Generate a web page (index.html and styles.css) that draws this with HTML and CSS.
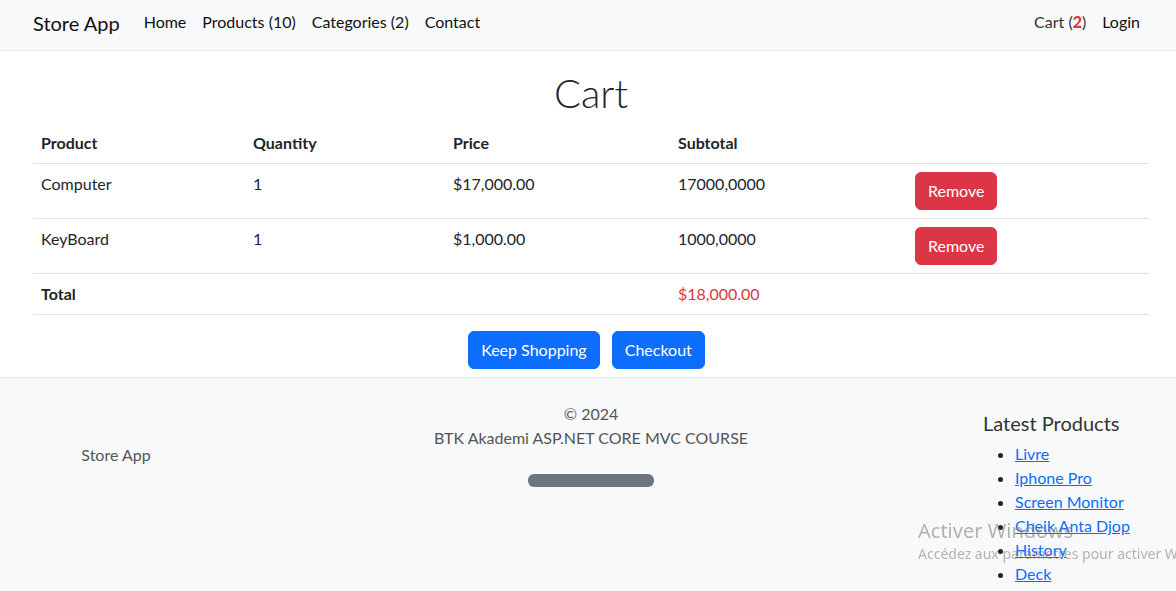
FILE: index.html
```html
<!DOCTYPE html>
<html lang="en">
<head>
<meta charset="utf-8">
<title>Cart - Store App</title>
<link rel="stylesheet" href="styles.css">
</head>
<body>
<nav class="navbar">
  <div class="nav-inner">
    <a class="brand" href="#">Store App</a>
    <ul class="nav-links">
      <li><a href="#">Home</a></li>
      <li><a href="#">Products (10)</a></li>
      <li><a href="#">Categories (2)</a></li>
      <li><a href="#">Contact</a></li>
    </ul>
    <ul class="nav-links nav-right">
      <li><a class="cart-link" href="#">Cart (<b class="cart-count">2</b>)</a></li>
      <li><a href="#">Login</a></li>
    </ul>
  </div>
</nav>

<main class="main">
  <h1 class="page-title">Cart</h1>
  <table class="cart-table">
    <thead>
      <tr>
        <th class="col-product">Product</th>
        <th class="col-qty">Quantity</th>
        <th class="col-price">Price</th>
        <th class="col-sub">Subtotal</th>
        <th class="col-action"></th>
      </tr>
    </thead>
    <tbody>
      <tr>
        <td>Computer</td>
        <td>1</td>
        <td>$17,000.00</td>
        <td>17000,0000</td>
        <td><button class="btn btn-danger">Remove</button></td>
      </tr>
      <tr>
        <td>KeyBoard</td>
        <td>1</td>
        <td>$1,000.00</td>
        <td>1000,0000</td>
        <td><button class="btn btn-danger">Remove</button></td>
      </tr>
      <tr class="total-row">
        <td><strong>Total</strong></td>
        <td></td>
        <td></td>
        <td class="total-amount">$18,000.00</td>
        <td></td>
      </tr>
    </tbody>
  </table>
  <div class="actions">
    <a class="btn btn-primary" href="#">Keep Shopping</a>
    <a class="btn btn-primary" href="#">Checkout</a>
  </div>
</main>

<footer class="footer">
  <div class="footer-grid">
    <div class="footer-brand">Store App</div>
    <div class="footer-center">
      <div>© 2024</div>
      <div>BTK Akademi ASP.NET CORE MVC COURSE</div>
      <span class="placeholder"></span>
    </div>
    <div class="footer-latest">
      <h5 class="latest-title">Latest Products</h5>
      <ul class="latest-list">
        <li><a href="#">Livre</a></li>
        <li><a href="#">Iphone Pro</a></li>
        <li><a href="#">Screen Monitor</a></li>
        <li><a href="#">Cheik Anta Djop</a></li>
        <li><a href="#">History</a></li>
        <li><a href="#">Deck</a></li>
      </ul>
    </div>
  </div>
</footer>

<div class="watermark">
  <div class="wm-title">Activer Windows</div>
  <div class="wm-sub">Accédez aux paramètres pour activer Windows.</div>
</div>
</body>
</html>
```
FILE: styles.css
```css
* { box-sizing: border-box; }

html, body {
  margin: 0;
  padding: 0;
}

body {
  font-family: Lato, "Noto Sans", "Liberation Sans", sans-serif;
  font-size: 16px;
  line-height: 1.5;
  color: #212529;
  background: #fff;
}

a { color: inherit; text-decoration: none; }

/* Navbar */
.navbar {
  background: #f8f9fa;
  border-bottom: 1px solid #e5e7ea;
  height: 51px;
}
.nav-inner {
  height: 50px;
  padding: 0 28px 0 33px;
  display: flex;
  align-items: center;
}
.brand {
  font-size: 20px;
  line-height: 30px;
  margin-right: 16px;
  margin-bottom: 4px;
  color: #111;
}
.nav-links {
  list-style: none;
  margin: 0;
  padding: 0;
  display: flex;
}
.nav-links a {
  display: block;
  padding: 8px;
  color: #111;
  line-height: 24px;
  margin-bottom: 7px;
}
.nav-right { margin-left: auto; }
.nav-links .cart-link { color: #333; }
.cart-count { color: #dc3545; font-weight: 900; }

/* Main */
.main {
  padding: 0 27px 8px 33px;
}
.page-title {
  text-align: center;
  font-size: 40px;
  font-weight: 300;
  line-height: 48px;
  margin: 18px 0 6px;
  color: #212529;
}

.cart-table {
  width: 100%;
  border-collapse: collapse;
  margin-bottom: 16px;
}
.cart-table th,
.cart-table td {
  text-align: left;
  vertical-align: top;
  padding: 8px;
  border-bottom: 1px solid #dee2e6;
  line-height: 24px;
}
.cart-table th { font-weight: 700; }
.col-product { width: 212px; }
.col-qty { width: 200px; }
.col-price { width: 225px; }
.col-sub { width: 237px; }
.total-amount { color: #dc3545; }

.btn {
  display: inline-block;
  font-family: inherit;
  font-size: 16px;
  line-height: 24px;
  padding: 6px 12px;
  border: 1px solid transparent;
  border-radius: 6px;
  color: #fff;
  cursor: pointer;
}
.btn-danger { background: #dc3545; border-color: #dc3545; }
.btn-primary { background: #0d6efd; border-color: #0d6efd; }

.actions {
  display: flex;
  justify-content: center;
  gap: 12px;
  padding-right: 9px;
}

/* Footer */
.footer {
  background: #f8f9fa;
  border-top: 1px solid #e5e7ea;
  padding: 24px 27px 0 33px;
}
.footer-grid {
  display: grid;
  grid-template-columns: 166px 1fr 166px;
  align-items: start;
}
.footer-brand {
  text-align: center;
  padding-top: 41px;
  color: #555;
}
.footer-center {
  text-align: center;
  color: #555;
}
.placeholder {
  display: inline-block;
  width: 126px;
  height: 13px;
  margin-top: 24px;
  border-radius: 6px;
  background: #6c757d;
  vertical-align: top;
}
.footer-latest { padding-top: 9px; }
.latest-title {
  font-size: 20px;
  font-weight: 400;
  line-height: 24px;
  margin: 0 0 7px;
  color: #333;
  white-space: nowrap;
}
.latest-list {
  margin: 0 0 16px;
  padding-left: 32px;
}
.latest-list a {
  color: #0d6efd;
  text-decoration: underline;
  white-space: nowrap;
}

/* OS activation watermark overlay */
.watermark {
  position: fixed;
  left: 918px;
  top: 518px;
  color: rgba(120, 120, 120, 0.55);
  white-space: nowrap;
  pointer-events: none;
  font-family: "Noto Sans", Lato, sans-serif;
}
.wm-title { font-size: 20px; line-height: 26px; }
.wm-sub { font-size: 14px; line-height: 20px; }
```
